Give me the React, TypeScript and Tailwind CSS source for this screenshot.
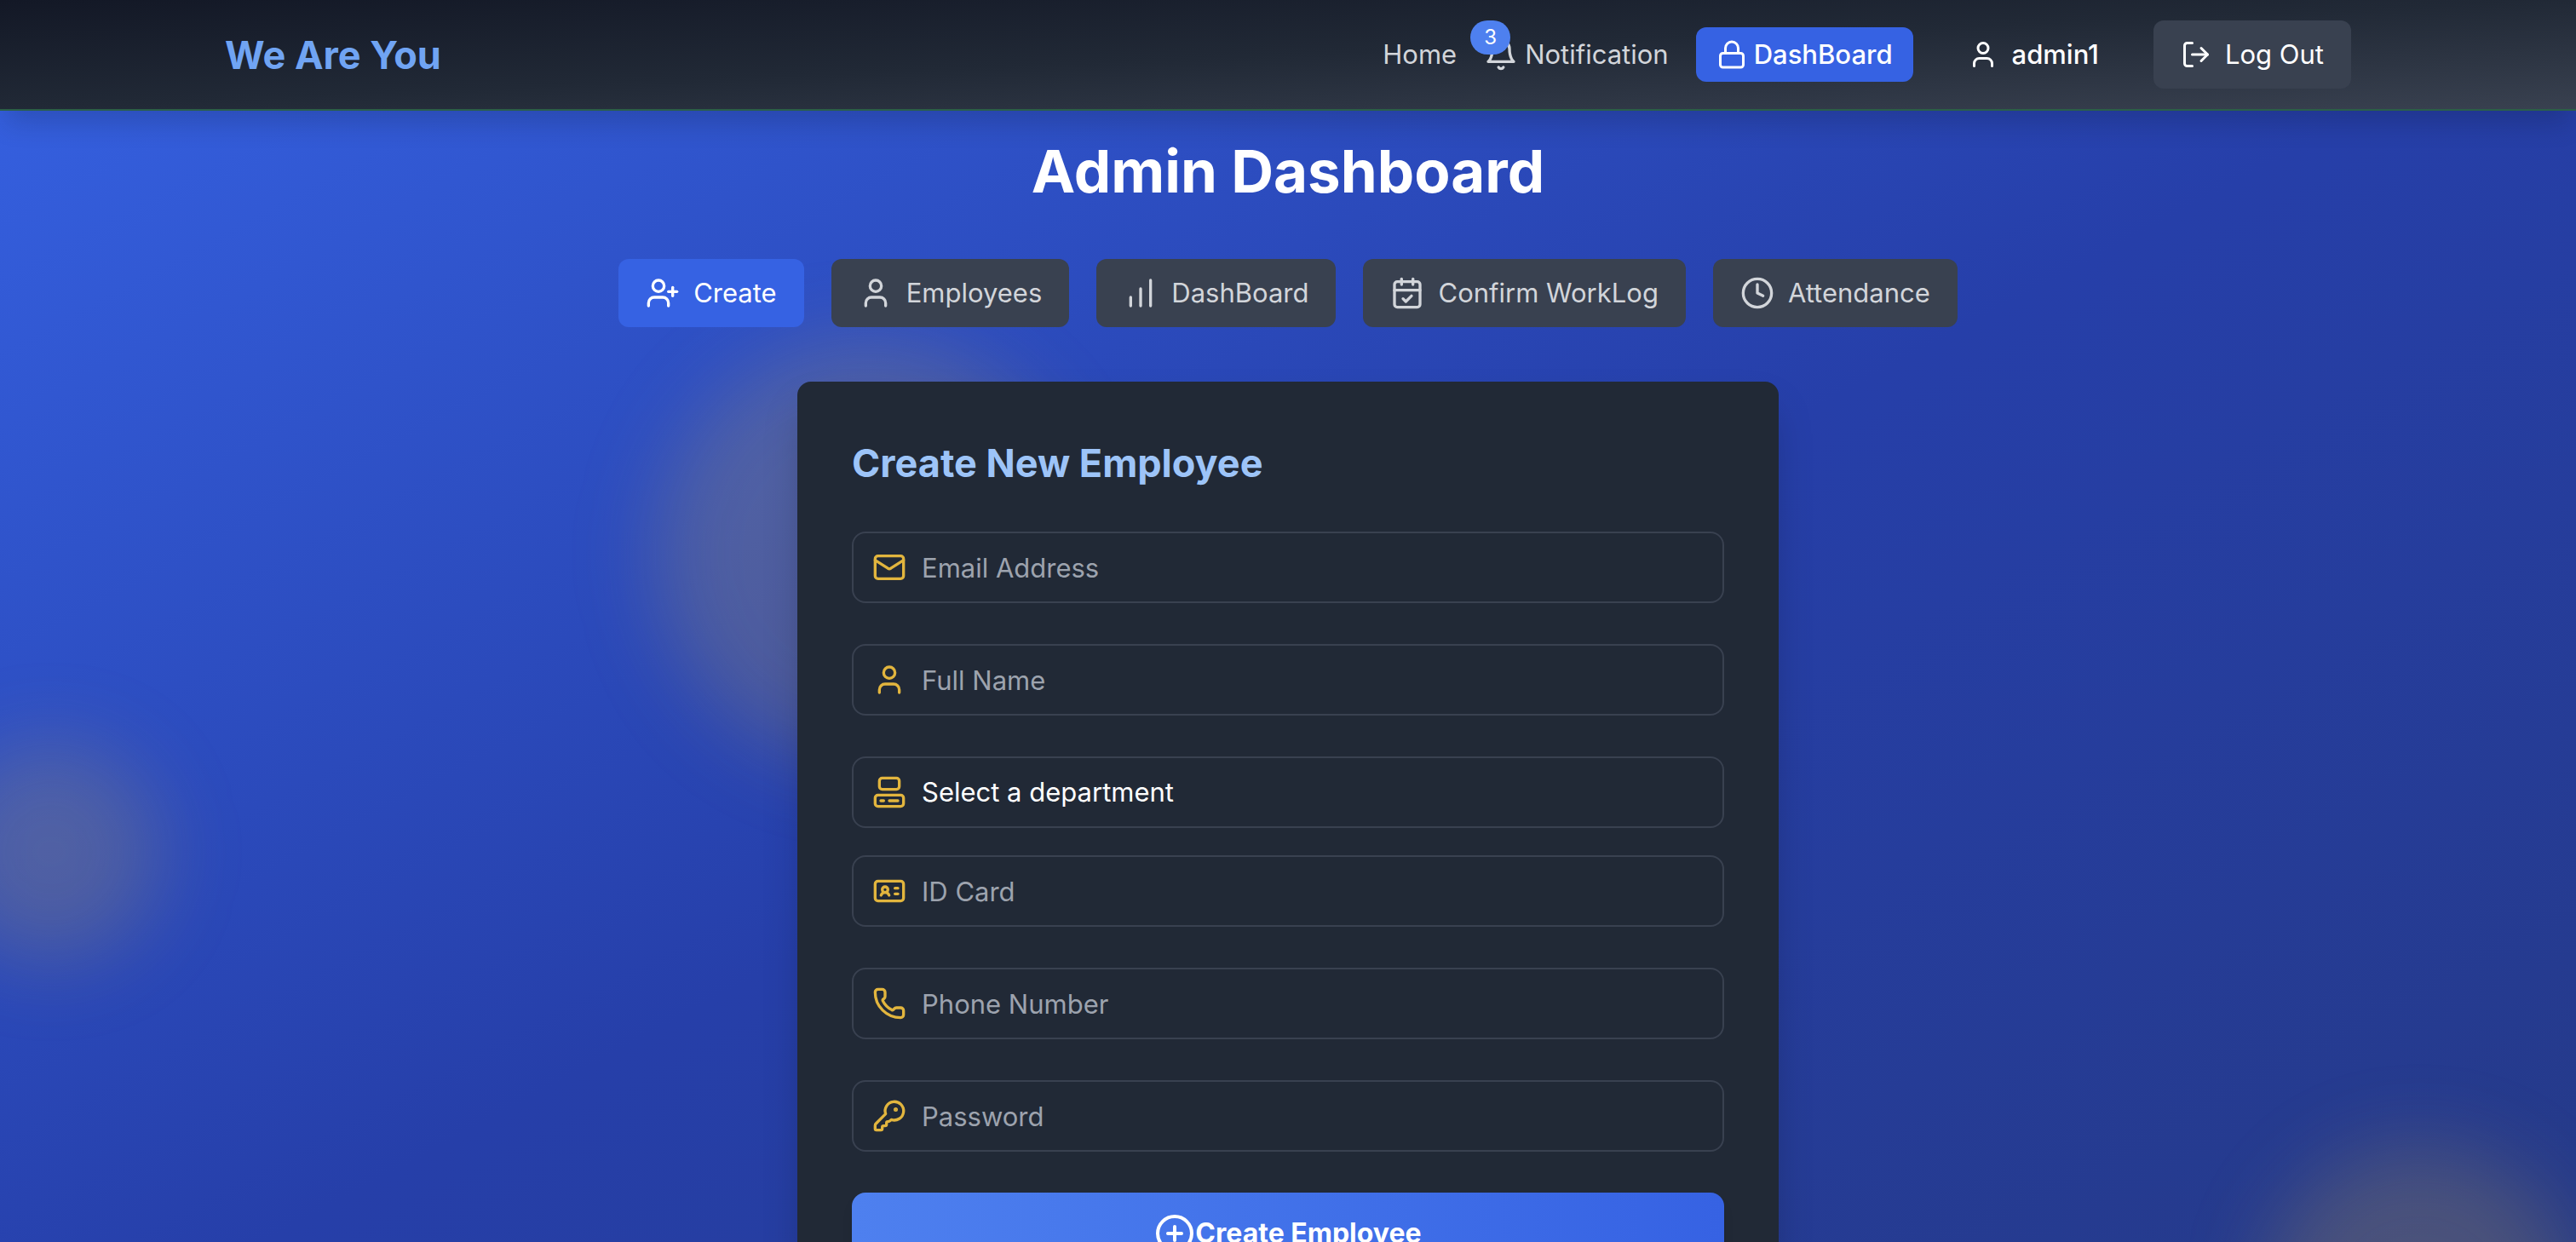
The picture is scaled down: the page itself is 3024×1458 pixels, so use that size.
import type { ComponentType, ReactNode } from 'react';
import {
  CalendarCheck,
  ChartNoAxesColumnIncreasing,
  CirclePlus,
  Clock,
  Computer,
  IdCard,
  KeyRound,
  Lock,
  LogOut,
  Mail,
  Phone,
  User,
  UserPlus,
} from 'lucide-react';

type Icon = ComponentType<{ className?: string }>;

function BellIcon({ className }: { className?: string }) {
  return (
    <svg
      className={className}
      viewBox="0 0 24 24"
      fill="none"
      stroke="currentColor"
      strokeWidth="2"
      strokeLinecap="round"
      strokeLinejoin="round"
      aria-hidden="true"
    >
      <path d="M6 8a6 6 0 0 1 12 0c0 7 3 9 3 9H3s3-2 3-9" />
      <path d="M10.3 21a1.94 1.94 0 0 0 3.4 0" />
    </svg>
  );
}

function Header() {
  return (
    <header className="relative z-10 border-b-2 border-[#2b5f48] bg-linear-to-br from-[#131826] via-[#212936] to-[#394150] shadow-[0_20px_30px_-6px_rgba(0,0,0,0.16)]">
      <div className="mx-auto flex h-32 max-w-[2560px] items-center justify-between px-8">
        <a href="#" className="text-[45px] leading-none font-bold text-[#70a4f3]">
          We Are You
        </a>
        <nav className="flex items-center gap-8 text-[31px] leading-12 text-[#d2d5da]">
          <a href="#">Home</a>
          <a href="#" className="relative flex items-center gap-2">
            <BellIcon className="size-10" />
            Notification
            <span className="absolute -top-4 -left-4 rounded-full bg-[#4e80ef] px-4 py-1 text-2xl leading-8 text-white">
              3
            </span>
          </a>
          <a
            href="#"
            className="flex h-16 items-center gap-2 rounded-xl bg-[#3662e3] px-6 font-medium text-white"
          >
            <Lock className="size-9" />
            DashBoard
          </a>
          <button type="button" className="flex h-20 items-center gap-4 px-8 font-medium text-white">
            <User className="size-9" />
            admin1
          </button>
          <button
            type="button"
            className="flex h-20 items-center gap-4 rounded-xl bg-[#394150] px-8 text-white"
          >
            <LogOut className="size-9" />
            Log Out
          </button>
        </nav>
      </div>
    </header>
  );
}

const tabs: { label: string; icon: Icon; active?: boolean }[] = [
  { label: 'Create', icon: UserPlus, active: true },
  { label: 'Employees', icon: User },
  { label: 'DashBoard', icon: ChartNoAxesColumnIncreasing },
  { label: 'Confirm WorkLog', icon: CalendarCheck },
  { label: 'Attendance', icon: Clock },
];

function Tabs() {
  return (
    <div className="flex flex-wrap justify-center gap-8">
      {tabs.map(({ label, icon: TabIcon, active }) => (
        <button
          key={label}
          type="button"
          className={
            active
              ? 'flex h-20 items-center gap-4 rounded-xl bg-[#3662e3] px-8 text-[31px] text-white'
              : 'flex h-20 items-center gap-4 rounded-xl bg-[#394150] px-8 text-[31px] text-[#d2d5da]'
          }
        >
          <TabIcon className="size-10" />
          {label}
        </button>
      ))}
    </div>
  );
}

function Field({ icon: FieldIcon, children }: { icon: Icon; children: ReactNode }) {
  return (
    <div className="relative">
      {children}
      <FieldIcon className="pointer-events-none absolute top-1/2 left-6 size-10 -translate-y-1/2 text-[#e2b53e]" />
    </div>
  );
}

function TextField({ icon, label, type }: { icon: Icon; label: string; type: string }) {
  return (
    <Field icon={icon}>
      <input
        type={type}
        aria-label={label}
        placeholder={label}
        className="h-21 w-full rounded-2xl border-2 border-[#394150] bg-transparent pr-6 pl-20 text-[31px] text-white placeholder:text-[#9da3ae]"
      />
    </Field>
  );
}

function EmployeeForm() {
  return (
    <form className="mx-auto mt-16 w-full max-w-6xl rounded-2xl bg-[#212936] p-16 shadow-2xl">
      <h2 className="text-[45px] leading-16 font-bold text-[#9dc4f8]">Create New Employee</h2>
      <div className="mt-12 flex flex-col gap-12">
        <TextField icon={Mail} label="Email Address" type="email" />
        <TextField icon={User} label="Full Name" type="text" />
        <div className="flex flex-col gap-8">
          <Field icon={Computer}>
            <select
              aria-label="Department"
              className="h-21 w-full appearance-none rounded-2xl border-2 border-[#394150] bg-transparent pr-6 pl-20 text-[31px] text-white"
            >
              <option>Select a department</option>
            </select>
          </Field>
          <TextField icon={IdCard} label="ID Card" type="text" />
        </div>
        <TextField icon={Phone} label="Phone Number" type="tel" />
        <TextField icon={KeyRound} label="Password" type="password" />
        <button
          type="submit"
          className="flex h-24 w-full items-center justify-center rounded-2xl bg-linear-to-r from-[#4e80ef] to-[#3662e3] text-[32px] font-bold text-white shadow-lg"
        >
          <CirclePlus className="size-12" />
          Create Employee
        </button>
      </div>
    </form>
  );
}

function Blobs() {
  return (
    <div className="pointer-events-none absolute inset-0 overflow-hidden" aria-hidden="true">
      <div className="absolute top-[400px] left-[770px] size-[500px] rounded-full bg-[#e2b53e]/20 blur-[48px]" />
      <div className="absolute top-[872px] -left-[68px] size-[256px] rounded-full bg-[#e2b53e]/20 blur-[48px]" />
      <div className="absolute top-[1345px] right-0 size-[368px] rounded-full bg-[#e2b53e]/20 blur-[48px]" />
    </div>
  );
}

export default function App() {
  return (
    <div className="h-screen overflow-x-hidden overflow-y-auto font-[Inter,'Liberation_Sans',sans-serif] [scrollbar-width:none]">
      <div className="relative min-h-full bg-linear-to-br from-[#3662e3] via-[#263fa9] to-[#253985]">
        <Blobs />
        <Header />
        <main className="relative px-8 pt-8 pb-16">
          <h1 className="text-center text-[69px] leading-[78px] font-bold text-white">Admin Dashboard</h1>
          <div className="mt-16">
            <Tabs />
          </div>
          <EmployeeForm />
        </main>
      </div>
    </div>
  );
}
